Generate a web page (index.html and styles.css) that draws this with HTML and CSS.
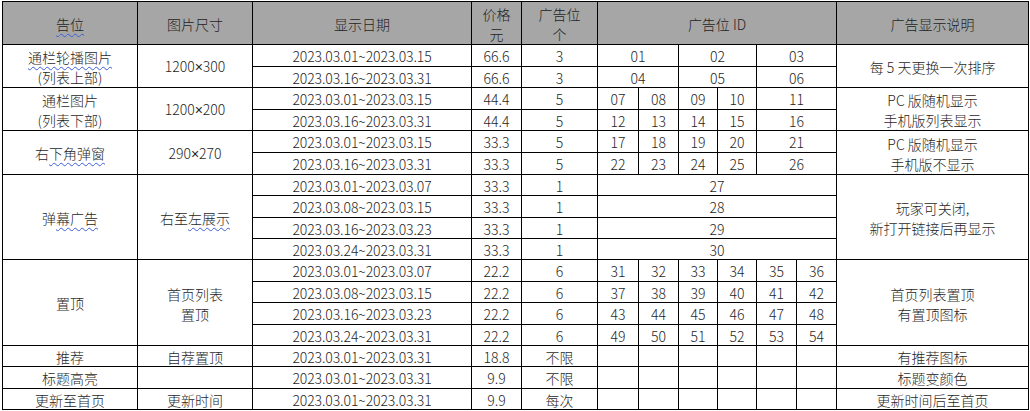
FILE: index.html
```html
<!DOCTYPE html>
<html lang="zh-CN">
<head>
<meta charset="utf-8">
<title>广告位价格表</title>
<link rel="stylesheet" href="styles.css">
</head>
<body>
<table class="ad-table">
  <colgroup>
    <col class="c-pos"><col class="c-size"><col class="c-date"><col class="c-price"><col class="c-count">
    <col class="c-id1"><col class="c-id2"><col class="c-id3"><col class="c-id4"><col class="c-id5"><col class="c-id6">
    <col class="c-desc">
  </colgroup>
  <thead>
    <tr class="head">
      <th><span class="sp-blue">告位</span></th>
      <th>图片尺寸</th>
      <th>显示日期</th>
      <th class="two">价格<br>元</th>
      <th class="two">广告位<br><span class="sp-red">个</span></th>
      <th colspan="6">广告位&nbsp;ID</th>
      <th>广告显示说明</th>
    </tr>
  </thead>
  <tbody>
    <tr class="h22">
      <td rowspan="2" class="two"><span class="sp-blue">通栏轮播图片</span><br>(列表上部)</td>
      <td rowspan="2">1200<span class="x">×</span>300</td>
      <td class="date">2023.03.01~2023.03.15</td><td>66.6</td><td>3</td>
      <td colspan="2">01</td><td colspan="2">02</td><td colspan="2">03</td>
      <td rowspan="2">每 5 天更换一次排序</td>
    </tr>
    <tr class="h21">
      <td class="date">2023.03.16~2023.03.31</td><td>66.6</td><td>3</td>
      <td colspan="2">04</td><td colspan="2">05</td><td colspan="2">06</td>
    </tr>
    <tr class="h22">
      <td rowspan="2" class="two">通栏图片<br>(列表下部)</td>
      <td rowspan="2">1200<span class="x">×</span>200</td>
      <td class="date">2023.03.01~2023.03.15</td><td>44.4</td><td>5</td>
      <td>07</td><td>08</td><td>09</td><td>10</td><td colspan="2">11</td>
      <td rowspan="2" class="two">PC 版随机显示<br><span class="sp-blue">手机版</span>列表显示</td>
    </tr>
    <tr class="h21">
      <td class="date">2023.03.16~2023.03.31</td><td>44.4</td><td>5</td>
      <td>12</td><td>13</td><td>14</td><td>15</td><td colspan="2">16</td>
    </tr>
    <tr class="h22">
      <td rowspan="2">右<span class="sp-blue">下角弹窗</span></td>
      <td rowspan="2">290<span class="x">×</span>270</td>
      <td class="date">2023.03.01~2023.03.15</td><td>33.3</td><td>5</td>
      <td>17</td><td>18</td><td>19</td><td>20</td><td colspan="2">21</td>
      <td rowspan="2" class="two">PC 版随机显示<br><span class="sp-blue">手机版</span>不显示</td>
    </tr>
    <tr class="h22">
      <td class="date">2023.03.16~2023.03.31</td><td>33.3</td><td>5</td>
      <td>22</td><td>23</td><td>24</td><td>25</td><td colspan="2">26</td>
    </tr>
    <tr class="h21">
      <td rowspan="4">弹<span class="sp-blue">幕广告</span></td>
      <td rowspan="4">右至<span class="sp-blue">左展示</span></td>
      <td class="date">2023.03.01~2023.03.07</td><td>33.3</td><td>1</td>
      <td colspan="6">27</td>
      <td rowspan="4" class="two">玩家可关闭,<br>新打开链接后再显示</td>
    </tr>
    <tr class="h22">
      <td class="date">2023.03.08~2023.03.15</td><td>33.3</td><td>1</td><td colspan="6">28</td>
    </tr>
    <tr class="h21">
      <td class="date">2023.03.16~2023.03.23</td><td>33.3</td><td>1</td><td colspan="6">29</td>
    </tr>
    <tr class="h21">
      <td class="date">2023.03.24~2023.03.31</td><td>33.3</td><td>1</td><td colspan="6">30</td>
    </tr>
    <tr class="h22">
      <td rowspan="4">置顶</td>
      <td rowspan="4" class="two">首页列表<br>置顶</td>
      <td class="date">2023.03.01~2023.03.07</td><td>22.2</td><td>6</td>
      <td>31</td><td>32</td><td>33</td><td>34</td><td>35</td><td>36</td>
      <td rowspan="4" class="two">首页列表置顶<br>有置顶图标</td>
    </tr>
    <tr class="h21">
      <td class="date">2023.03.08~2023.03.15</td><td>22.2</td><td>6</td>
      <td>37</td><td>38</td><td>39</td><td>40</td><td>41</td><td>42</td>
    </tr>
    <tr class="h22">
      <td class="date">2023.03.16~2023.03.23</td><td>22.2</td><td>6</td>
      <td>43</td><td>44</td><td>45</td><td>46</td><td>47</td><td>48</td>
    </tr>
    <tr class="h21">
      <td class="date">2023.03.24~2023.03.31</td><td>22.2</td><td>6</td>
      <td>49</td><td>50</td><td>51</td><td>52</td><td>53</td><td>54</td>
    </tr>
    <tr class="h21">
      <td>推荐</td><td>自荐置顶</td>
      <td class="date">2023.03.01~2023.03.31</td><td>18.8</td><td>不限</td>
      <td></td><td></td><td></td><td></td><td></td><td></td>
      <td>有推荐图标</td>
    </tr>
    <tr class="h22">
      <td>标题高亮</td><td></td>
      <td class="date">2023.03.01~2023.03.31</td><td>9.9</td><td>不限</td>
      <td></td><td></td><td></td><td></td><td></td><td></td>
      <td>标题变颜色</td>
    </tr>
    <tr class="h21">
      <td>更新至首页</td><td>更新时间</td>
      <td class="date">2023.03.01~2023.03.31</td><td>9.9</td><td>每次</td>
      <td></td><td></td><td></td><td></td><td></td><td></td>
      <td>更新时间后至首页</td>
    </tr>
  </tbody>
</table>
</body>
</html>
```

FILE: styles.css
```css
html, body {
  margin: 0;
  padding: 0;
  background: #ffffff;
}

body {
  padding: 1px 0 0 2px;
  font-family: "Noto Sans CJK SC", "Noto Sans", sans-serif;
  font-size: 14px;
  font-weight: 300;
  color: #1f1f1f;
}

.ad-table {
  border-collapse: collapse;
  table-layout: fixed;
  width: 1026px;
}

.c-pos { width: 135px; }
.c-size { width: 115px; }
.c-date { width: 219px; }
.c-price { width: 50px; }
.c-count { width: 76px; }
.c-id1 { width: 41px; }
.c-id2 { width: 40px; }
.c-id3 { width: 39px; }
.c-id4 { width: 39px; }
.c-id5 { width: 40px; }
.c-id6 { width: 40px; }
.c-desc { width: 192px; }

.ad-table th,
.ad-table td {
  border: 1px solid #000;
  padding: 2px 0 0 0;
  text-align: center;
  vertical-align: middle;
  line-height: 17px;
  font-weight: 300;
  white-space: nowrap;
  overflow: hidden;
}

.ad-table .two {
  line-height: 20px;
}

.head th {
  background: #a6a6a6;
  height: 39px;
}

.head th.two {
  line-height: 19.5px;
  padding-top: 3px;
  height: 39px;
}

.h22 > td { height: 19px; }
.h21 > td { height: 18px; }

.ad-table .date {
  letter-spacing: -0.1px;
}

.x {
  font-family: "Liberation Sans", sans-serif;
}

.sp-blue {
  text-decoration: underline wavy #3d5ed8;
  text-decoration-thickness: 1px;
  text-underline-offset: 3px;
  text-decoration-skip-ink: none;
}

.sp-red {
  text-decoration: underline wavy #e0302a;
  text-decoration-thickness: 1px;
  text-underline-offset: 4px;
  text-decoration-skip-ink: none;
}
```
